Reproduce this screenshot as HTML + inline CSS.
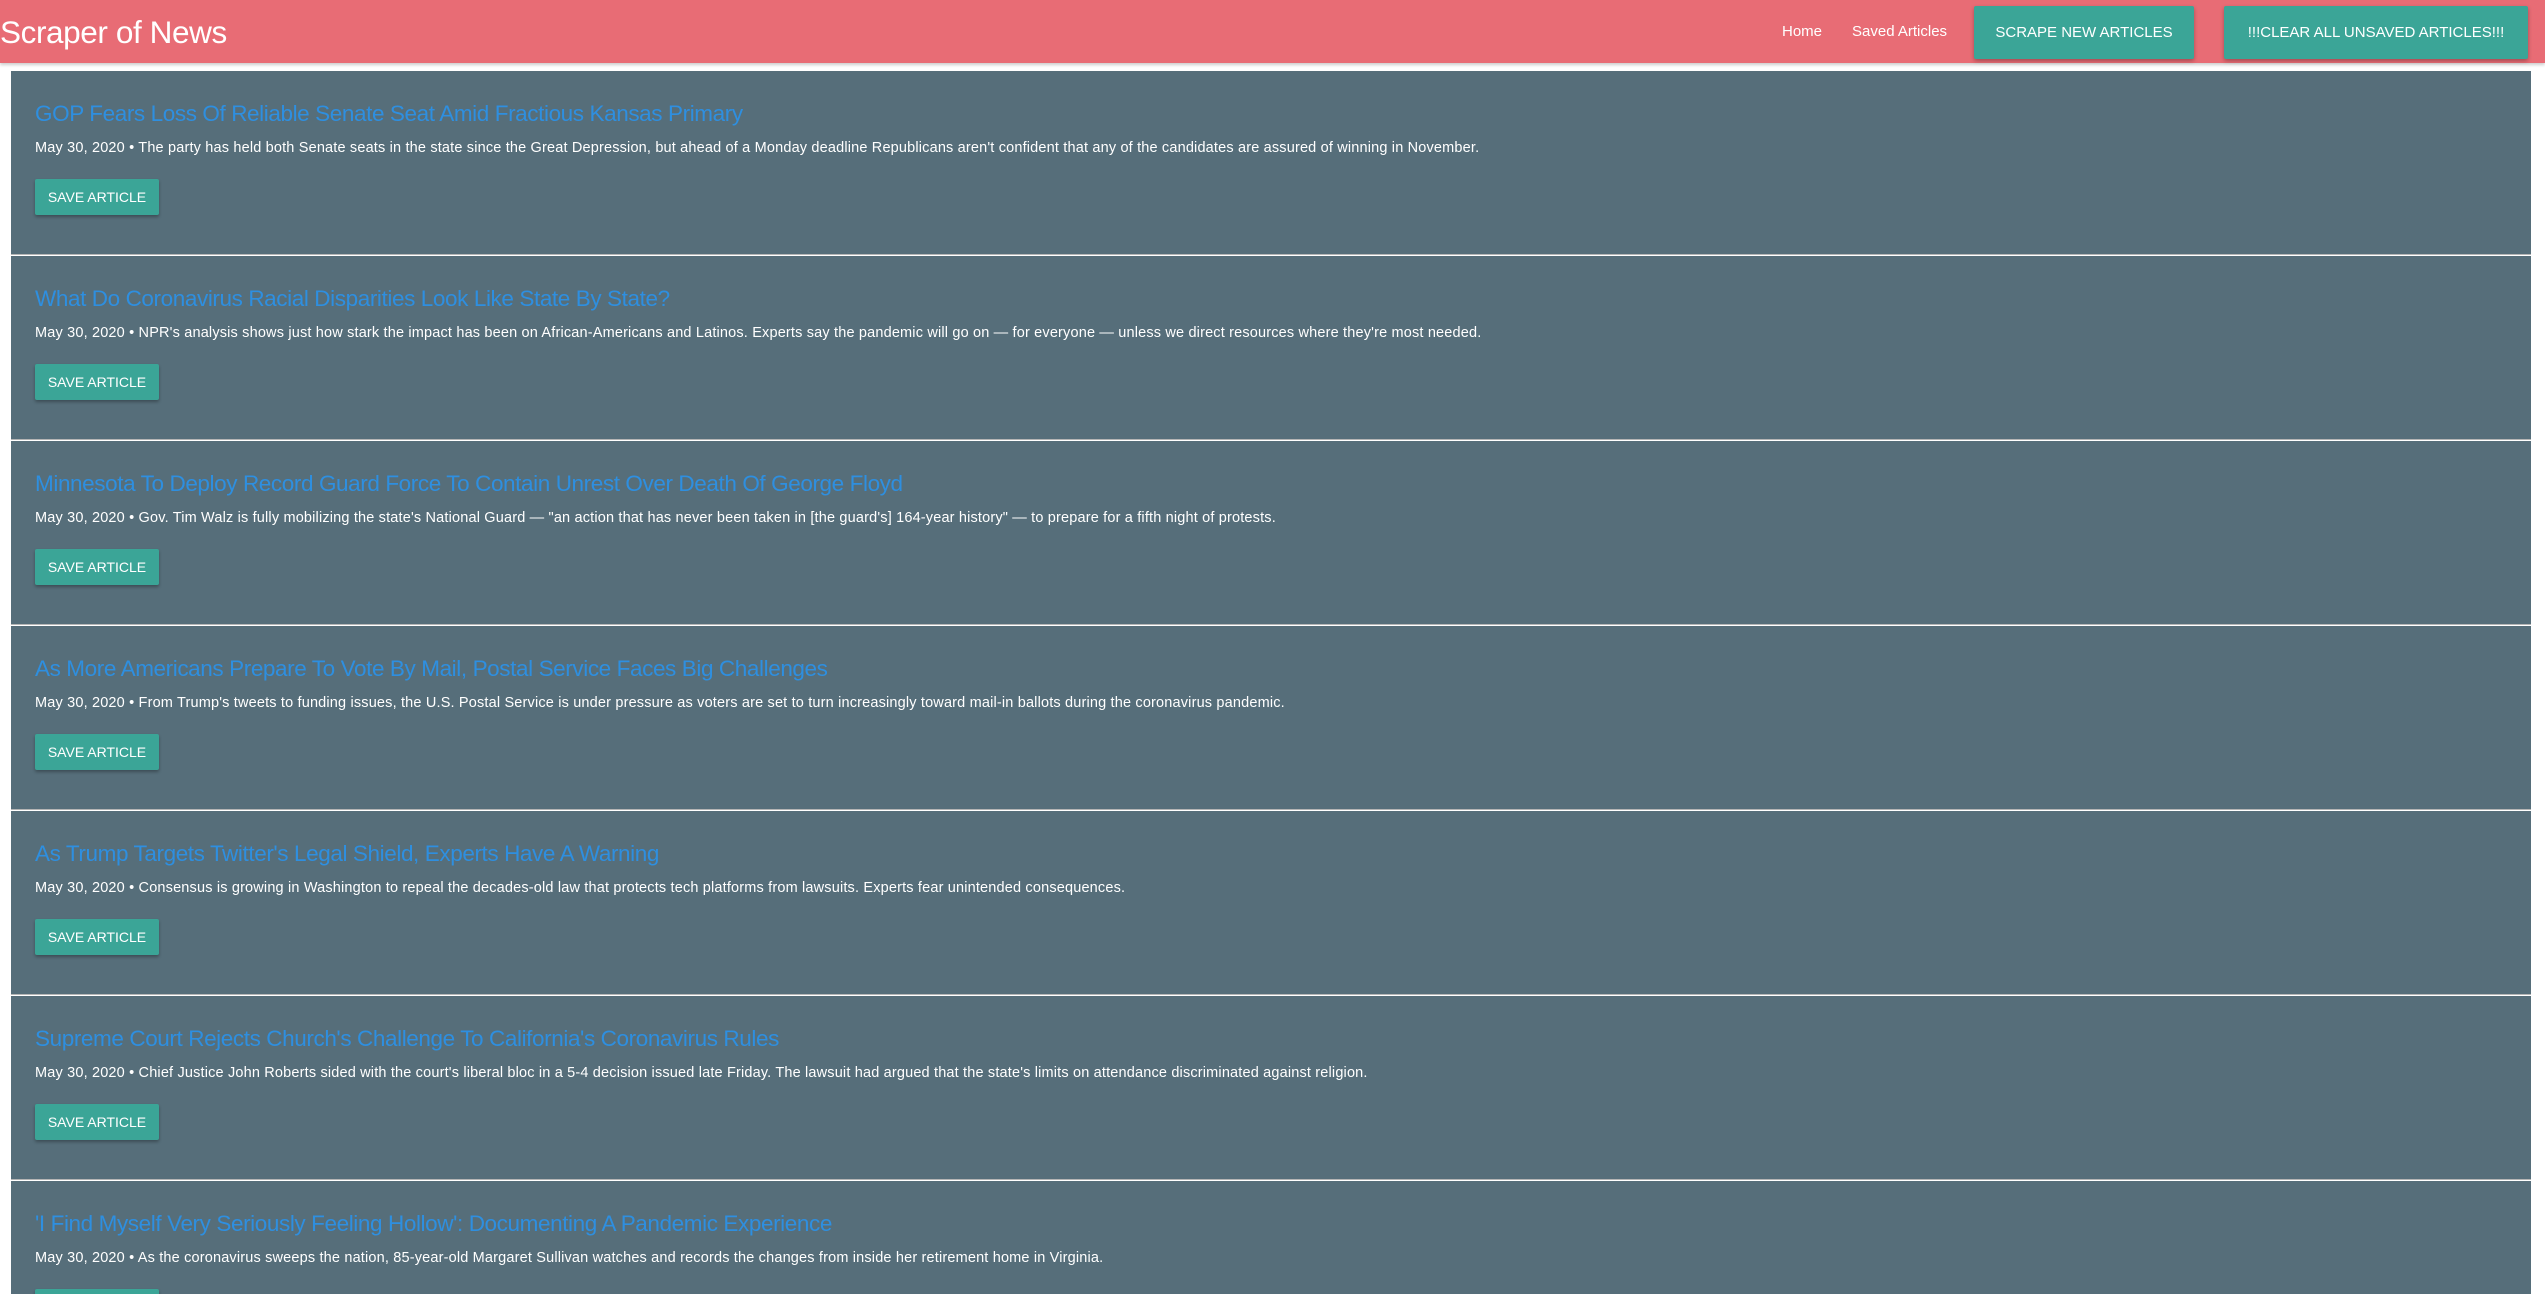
<!DOCTYPE html>
<html><head><meta charset="utf-8"><style>
html,body{margin:0;padding:0;background:#fff;width:2545px;height:1294px;overflow:hidden;font-family:"Segoe UI","Liberation Sans",sans-serif;}
.root{position:relative;width:2545px;height:1294px;overflow:hidden}
.nav{position:absolute;left:0;top:0;width:2545px;height:63px;background:#e86c75;box-shadow:0 2px 3px rgba(0,0,0,.2);z-index:2}
.brand{position:absolute;left:0;top:11px;color:#fff;font-size:31.5px;line-height:42px;letter-spacing:-0.4px}
.lnk{position:absolute;top:21px;color:#fff;font-size:15px;line-height:22px}
.nbtn{position:absolute;top:6px;height:53px;background:#3ba597;color:#fff;font-size:15px;line-height:53px;text-align:center;box-shadow:0 2px 4px rgba(0,0,0,.3);border-radius:2px}
.wrap{position:absolute;left:11px;top:71px;width:2520px}
.card{position:relative;height:183px;background:#566e7a;border-bottom:1px solid #b5b5b5;margin-bottom:1px}
.t{position:absolute;left:24px;top:28px;color:#2e8fe0;font-size:22.5px;line-height:30px;font-weight:300;white-space:nowrap;letter-spacing:-0.4px}
.s{position:absolute;left:24px;top:67px;color:#fff;font-size:14.5px;line-height:20px;white-space:nowrap;letter-spacing:0.17px}
.b{position:absolute;left:24px;top:108px;width:124px;height:36px;background:#3ba597;color:#fff;font-size:14px;line-height:36px;text-align:center;border-radius:2px;box-shadow:0 2px 3px rgba(0,0,0,.3)}
</style></head><body><div class="root">
<div class="nav">
<div class="brand">Scraper of News</div>
<div class="lnk" style="left:1782px">Home</div>
<div class="lnk" style="left:1852px">Saved Articles</div>
<div class="nbtn" style="left:1974px;width:220px">SCRAPE NEW ARTICLES</div>
<div class="nbtn" style="left:2224px;width:304px">!!!CLEAR ALL UNSAVED ARTICLES!!!</div>
</div>
<div class="wrap">
<div class="card"><div class="t">GOP Fears Loss Of Reliable Senate Seat Amid Fractious Kansas Primary</div><div class="s">May 30, 2020 • The party has held both Senate seats in the state since the Great Depression, but ahead of a Monday deadline Republicans aren't confident that any of the candidates are assured of winning in November.</div><div class="b">SAVE ARTICLE</div></div>
<div class="card"><div class="t">What Do Coronavirus Racial Disparities Look Like State By State?</div><div class="s">May 30, 2020 • NPR's analysis shows just how stark the impact has been on African-Americans and Latinos. Experts say the pandemic will go on — for everyone — unless we direct resources where they're most needed.</div><div class="b">SAVE ARTICLE</div></div>
<div class="card"><div class="t">Minnesota To Deploy Record Guard Force To Contain Unrest Over Death Of George Floyd</div><div class="s">May 30, 2020 • Gov. Tim Walz is fully mobilizing the state's National Guard — "an action that has never been taken in [the guard's] 164-year history" — to prepare for a fifth night of protests.</div><div class="b">SAVE ARTICLE</div></div>
<div class="card"><div class="t">As More Americans Prepare To Vote By Mail, Postal Service Faces Big Challenges</div><div class="s">May 30, 2020 • From Trump's tweets to funding issues, the U.S. Postal Service is under pressure as voters are set to turn increasingly toward mail-in ballots during the coronavirus pandemic.</div><div class="b">SAVE ARTICLE</div></div>
<div class="card"><div class="t">As Trump Targets Twitter's Legal Shield, Experts Have A Warning</div><div class="s">May 30, 2020 • Consensus is growing in Washington to repeal the decades-old law that protects tech platforms from lawsuits. Experts fear unintended consequences.</div><div class="b">SAVE ARTICLE</div></div>
<div class="card"><div class="t">Supreme Court Rejects Church's Challenge To California's Coronavirus Rules</div><div class="s">May 30, 2020 • Chief Justice John Roberts sided with the court's liberal bloc in a 5-4 decision issued late Friday. The lawsuit had argued that the state's limits on attendance discriminated against religion.</div><div class="b">SAVE ARTICLE</div></div>
<div class="card"><div class="t">'I Find Myself Very Seriously Feeling Hollow': Documenting A Pandemic Experience</div><div class="s">May 30, 2020 • As the coronavirus sweeps the nation, 85-year-old Margaret Sullivan watches and records the changes from inside her retirement home in Virginia.</div><div class="b">SAVE ARTICLE</div></div>
</div>
</div></body></html>
